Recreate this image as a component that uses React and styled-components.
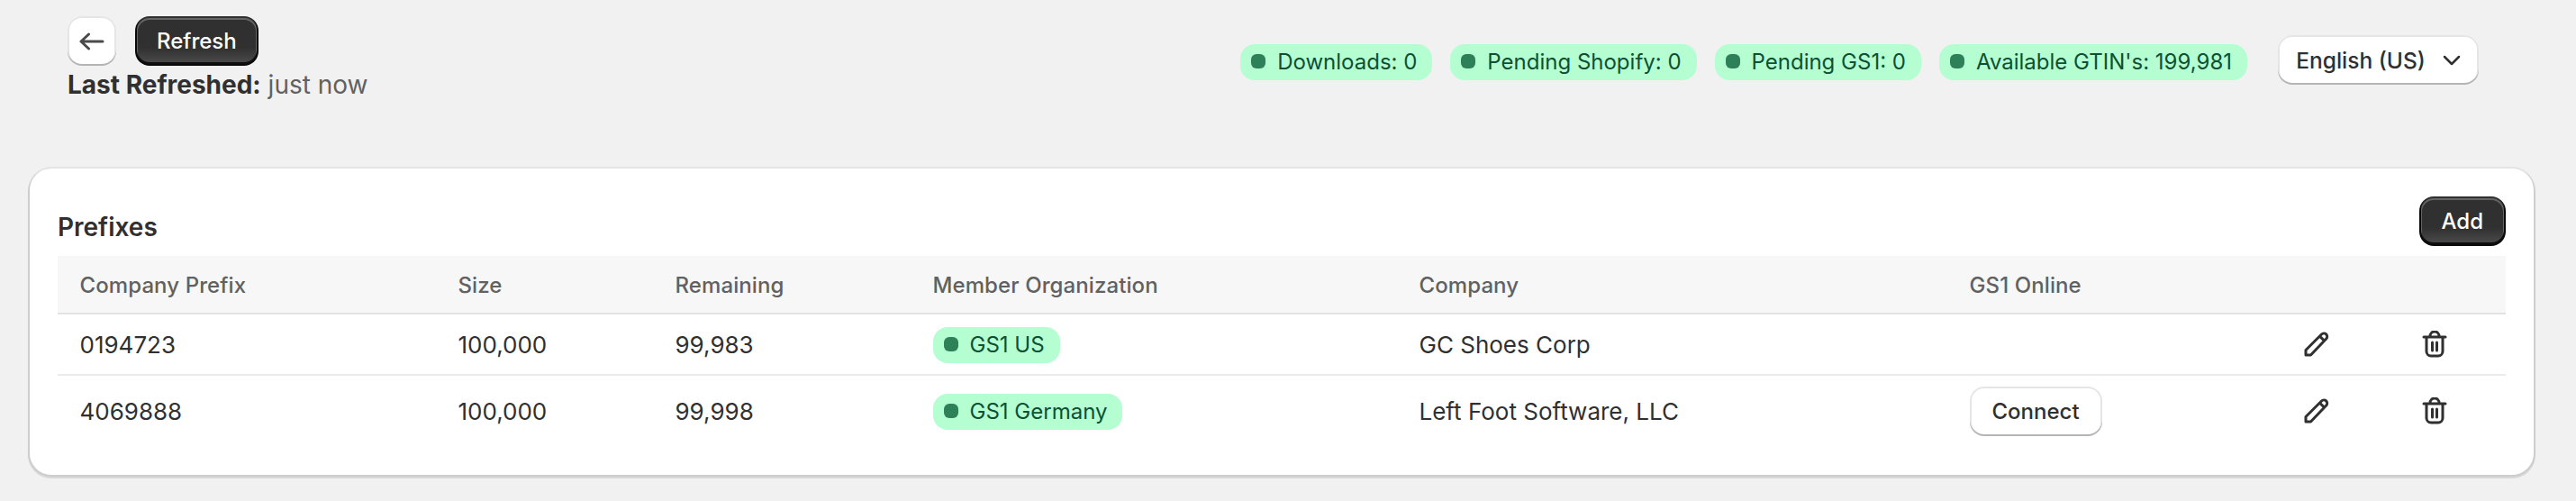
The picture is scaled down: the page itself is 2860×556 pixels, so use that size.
import React from 'react';
import styled, { createGlobalStyle } from 'styled-components';

const Global = createGlobalStyle`
  html, body {
    margin: 0;
    background: #f1f1f1;
    color: #303030;
    font-family: Inter, "Noto Sans", sans-serif;
    font-size: 26px;
    line-height: 40px;
  }
`;

const Page = styled.div`
  width: 2860px;
  height: 556px;
  overflow: hidden;
  padding: 18px 47px 0 33px;
  box-sizing: border-box;
`;

const TopBar = styled.div`
  display: flex;
  justify-content: space-between;
  align-items: flex-start;
  padding: 0 61px 0 42px;
  height: 169px;
`;

const Refreshing = styled.div`
  display: flex;
  flex-direction: column;
`;

const ButtonRow = styled.div`
  display: flex;
  align-items: center;
  gap: 21px;
`;

const LastRefreshed = styled.div`
  color: #616161;
  font-size: 28px;
  line-height: 42px;
  b {
    color: #303030;
    font-weight: 650;
  }
`;

const Status = styled.div`
  display: flex;
  align-items: center;
  margin-top: 21px;
`;

const Badges = styled.div`
  display: flex;
  gap: 20px;
  margin: 4px 34px 0 0;
`;

const Badge = styled.span`
  display: inline-flex;
  align-items: center;
  height: 40px;
  padding: 0 17px 0 12px;
  border-radius: 16px;
  background: #b4fed2;
  color: #0c5132;
  font-size: 24px;
  white-space: nowrap;
  &::before {
    content: '';
    width: 16px;
    height: 16px;
    margin: -1px 13px 0 0;
    border-radius: 6px;
    background: #2e8058;
  }
`;

const BaseButton = styled.button`
  display: inline-flex;
  align-items: center;
  justify-content: center;
  height: 55px;
  padding: 0 ${(props) => props.$pad || 24}px;
  border: 0;
  border-radius: 16px;
  font-family: inherit;
  font-size: 24px;
  font-weight: 500;
`;

const PrimaryButton = styled(BaseButton)`
  color: #fff;
  background: linear-gradient(180deg, rgba(48, 48, 48, 0) 63%, rgba(255, 255, 255, 0.15) 100%), #303030;
  box-shadow: inset 0 -2px 0 2px rgba(0, 0, 0, 0.8), inset 0 0 0 2px #303030, inset 0 1px 0 3px rgba(255, 255, 255, 0.25);
`;

const SecondaryButton = styled(BaseButton)`
  color: #303030;
  background: #fff;
  box-shadow: inset 0 -2px 0 0 #b5b5b5, inset 0 0 0 2px rgba(0, 0, 0, 0.1), inset 0 1px 0 3px #fff;
`;

const BackButton = styled(SecondaryButton)`
  width: 54px;
  padding: 0;
  color: #4a4a4a;
`;

const Select = styled(SecondaryButton)`
  gap: 19px;
  width: 223px;
  padding: 0;
  font-size: 24.5px;
  font-weight: 450;
`;

const Card = styled.section`
  padding: 31px 31px 32px 31px;
  height: 340px;
  box-sizing: border-box;
  background: #fff;
  border-radius: 24px;
  box-shadow: 0 0 0 2px rgba(0, 0, 0, 0.05), 0 2px 0 2px rgba(0, 0, 0, 0.1);
`;

const CardHeader = styled.div`
  display: flex;
  justify-content: space-between;
  align-items: center;
  margin-bottom: 11px;
`;

const Title = styled.h2`
  margin: 12px 0 0;
  font-size: 28px;
  font-weight: 600;
  line-height: 40px;
`;

const Table = styled.table`
  width: 2718px;
  table-layout: fixed;
  border-collapse: collapse;
`;

const HeadCell = styled.th`
  width: ${(props) => props.$width}px;
  height: 64px;
  padding: 2px 0 0 24.5px;
  box-sizing: border-box;
  background: #f7f7f7;
  border-bottom: 2px solid #e3e3e3;
  color: #616161;
  font-size: 24px;
  font-weight: 500;
  letter-spacing: 0.1px;
  text-align: left;
`;

const Row = styled.tr`
  & + & td {
    border-top: 2px solid #ebebeb;
  }
`;

const Cell = styled.td`
  padding: 12px 0 12px 24.5px;
  white-space: nowrap;
  line-height: 40px;
  vertical-align: middle;
`;

const CellText = styled.span`
  position: relative;
  top: 1px;
`;

const IconWrap = styled.span`
  display: flex;
  color: #303030;
  svg {
    display: block;
  }
`;

const ArrowLeft = () => (
  <svg width="28" height="20" viewBox="0 0 28 20" fill="none" stroke="currentColor" strokeWidth="3" strokeLinecap="round" strokeLinejoin="round">
    <path d="M26 10H2M10.5 2 2 10l8.5 8" />
  </svg>
);

const ChevronDown = () => (
  <svg width="20" height="12" viewBox="0 0 20 12" fill="none" stroke="currentColor" strokeWidth="2.5" strokeLinecap="round" strokeLinejoin="round">
    <path d="M2 2l8 8 8-8" />
  </svg>
);

const Pencil = () => (
  <svg width="28" height="28" viewBox="0 0 28 28" fill="none" stroke="currentColor" strokeWidth="3" strokeLinejoin="round">
    <path d="M2 26v-5.5L19.5 3a3.6 3.6 0 0 1 5.2 5L7.5 26z" />
    <path d="M17.4 5.2l5.2 5" />
  </svg>
);

const Trash = () => (
  <svg width="28" height="30" viewBox="0 0 28 30" fill="none" stroke="currentColor" strokeWidth="3" strokeLinecap="round" strokeLinejoin="round">
    <path d="M2 7h24M9 7V6a5 5 0 0 1 10 0v1M5 7v16a5 5 0 0 0 5 5h8a5 5 0 0 0 5-5V7M11.5 13v9M16.5 13v9" />
  </svg>
);

const columns = [
  ['Company Prefix', 420],
  ['Size', 241],
  ['Remaining', 286],
  ['Member Organization', 540],
  ['Company', 611],
  ['GS1 Online', 371],
  ['', 131],
  ['', 118],
];

const prefixes = [
  { prefix: '0194723', size: '100,000', remaining: '99,983', org: 'GS1 US', company: 'GC Shoes Corp' },
  { prefix: '4069888', size: '100,000', remaining: '99,998', org: 'GS1 Germany', company: 'Left Foot Software, LLC', connect: true },
];

const statuses = ['Downloads: 0', 'Pending Shopify: 0', 'Pending GS1: 0', "Available GTIN's: 199,981"];

const App = () => (
  <Page>
    <Global />
    <TopBar>
      <Refreshing>
        <ButtonRow>
          <BackButton aria-label="Back">
            <ArrowLeft />
          </BackButton>
          <PrimaryButton>Refresh</PrimaryButton>
        </ButtonRow>
        <LastRefreshed>
          <b>Last Refreshed:</b> just now
        </LastRefreshed>
      </Refreshing>
      <Status>
        <Badges>
          {statuses.map((status) => (
            <Badge key={status}>{status}</Badge>
          ))}
        </Badges>
        <Select>
          English (US)
          <ChevronDown />
        </Select>
      </Status>
    </TopBar>
    <Card>
      <CardHeader>
        <Title>Prefixes</Title>
        <PrimaryButton $pad={25}>Add</PrimaryButton>
      </CardHeader>
      <Table>
        <thead>
          <tr>
            {columns.map(([label, width], index) => (
              <HeadCell key={index} $width={width}>
                {label}
              </HeadCell>
            ))}
          </tr>
        </thead>
        <tbody>
          {prefixes.map((item) => (
            <Row key={item.prefix}>
              <Cell><CellText>{item.prefix}</CellText></Cell>
              <Cell><CellText>{item.size}</CellText></Cell>
              <Cell><CellText>{item.remaining}</CellText></Cell>
              <Cell>
                <Badge>{item.org}</Badge>
              </Cell>
              <Cell><CellText>{item.company}</CellText></Cell>
              <Cell>{item.connect && <SecondaryButton $pad={25}>Connect</SecondaryButton>}</Cell>
              <Cell>
                <IconWrap>
                  <Pencil />
                </IconWrap>
              </Cell>
              <Cell>
                <IconWrap>
                  <Trash />
                </IconWrap>
              </Cell>
            </Row>
          ))}
        </tbody>
      </Table>
    </Card>
  </Page>
);

export default App;
